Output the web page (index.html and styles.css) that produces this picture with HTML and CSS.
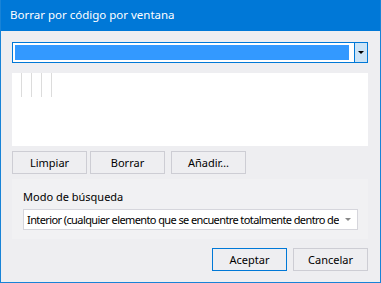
FILE: index.html
```html
<!DOCTYPE html>
<html lang="es">
<head>
  <meta charset="UTF-8" />
  <title>Borrar por código por ventana</title>
  <link rel="stylesheet" href="styles.css">
</head>
<body>
  <div class="window">
    <div class="title-bar">Borrar por código por ventana</div>

    <div class="content">
      <div class="combo active">
        <div class="combo-value"><span class="selection"></span></div>
        <div class="combo-btn"><span class="arrow"></span></div>
      </div>

      <div class="list">
        <div class="cols">
          <span></span><span></span><span></span><span></span>
        </div>
      </div>

      <div class="button-row">
        <button class="btn">Limpiar</button>
        <button class="btn">Borrar</button>
        <button class="btn add">Añadir…</button>
      </div>

      <div class="panel">
        <div class="label">Modo de búsqueda</div>
        <div class="select">
          <div class="select-text">Interior (cualquier elemento que se encuentre totalmente dentro de</div>
          <div class="select-btn"><span class="arrow grey"></span></div>
        </div>
      </div>

      <div class="footer">
        <button class="btn default">Aceptar</button>
        <button class="btn">Cancelar</button>
      </div>
    </div>
  </div>
</body>
</html>
```

FILE: styles.css
```css
body {
  margin: 0;
  font-family: "Noto Sans", sans-serif;
  font-size: 11px;
  color: #000;
}

.window {
  width: 381px;
  height: 283px;
  box-sizing: border-box;
  border: 1px solid #1883d7;
  border-top: 0;
  background: #eeeef1;
  overflow: hidden;
}

.title-bar {
  height: 31px;
  line-height: 30px;
  padding-left: 9px;
  background: #0078d7;
  color: #fff;
  font-size: 11.5px;
}

.content {
  padding: 11px 12px 0 11px;
}

/* top combo */
.combo {
  display: flex;
  height: 21px;
  box-sizing: border-box;
  border: 1px solid #0078d7;
  background: #fff;
}

.combo-value {
  flex: 1;
  padding: 2px 5px 2px 2px;
  display: flex;
}

.selection {
  flex: 1;
  background: #3399ff;
}

.combo-btn {
  width: 12px;
  border-left: 1px solid #0078d7;
  background: #cce4f7;
  display: flex;
  align-items: center;
  justify-content: center;
}

.arrow {
  width: 0;
  height: 0;
  border-left: 3px solid transparent;
  border-right: 3px solid transparent;
  border-top: 3px solid #000;
}

.arrow.grey {
  border-top-color: #888;
}

/* list box */
.list {
  margin-top: 10px;
  height: 73px;
  background: #fff;
}

.cols {
  display: flex;
  height: 24px;
}

.cols span {
  width: 9px;
  border-right: 1px solid #dcdcdc;
}

/* buttons */
.button-row {
  display: flex;
  margin-top: 5px;
}

.btn {
  width: 75px;
  height: 23px;
  padding: 0;
  border: 1px solid #cdcdd4;
  background: #eeeef1;
  font-family: "Noto Sans", sans-serif;
  font-size: 11px;
  color: #000;
}

.button-row .btn + .btn {
  margin-left: 3px;
}

.button-row .add {
  margin-left: 6px !important;
}

/* search mode */
.panel {
  margin-top: 5px;
  height: 60px;
  padding: 10px 0 0 11px;
  box-sizing: border-box;
  background: #f1f1f3;
}

.label {
  line-height: 16px;
}

.select {
  display: flex;
  width: 335px;
  height: 21px;
  margin-top: 4px;
  box-sizing: border-box;
  border: 1px solid #d6d6dc;
  background: #fff;
}

.select-text {
  flex: 1;
  padding-left: 3px;
  line-height: 19px;
  letter-spacing: -0.6px;
  white-space: nowrap;
  overflow: hidden;
}

.select-btn {
  width: 18px;
  display: flex;
  align-items: center;
  justify-content: center;
}

/* footer */
.footer {
  display: flex;
  justify-content: flex-end;
  gap: 6px;
  margin-top: 9px;
}

.btn.default {
  border-color: #0078d7;
}
```
